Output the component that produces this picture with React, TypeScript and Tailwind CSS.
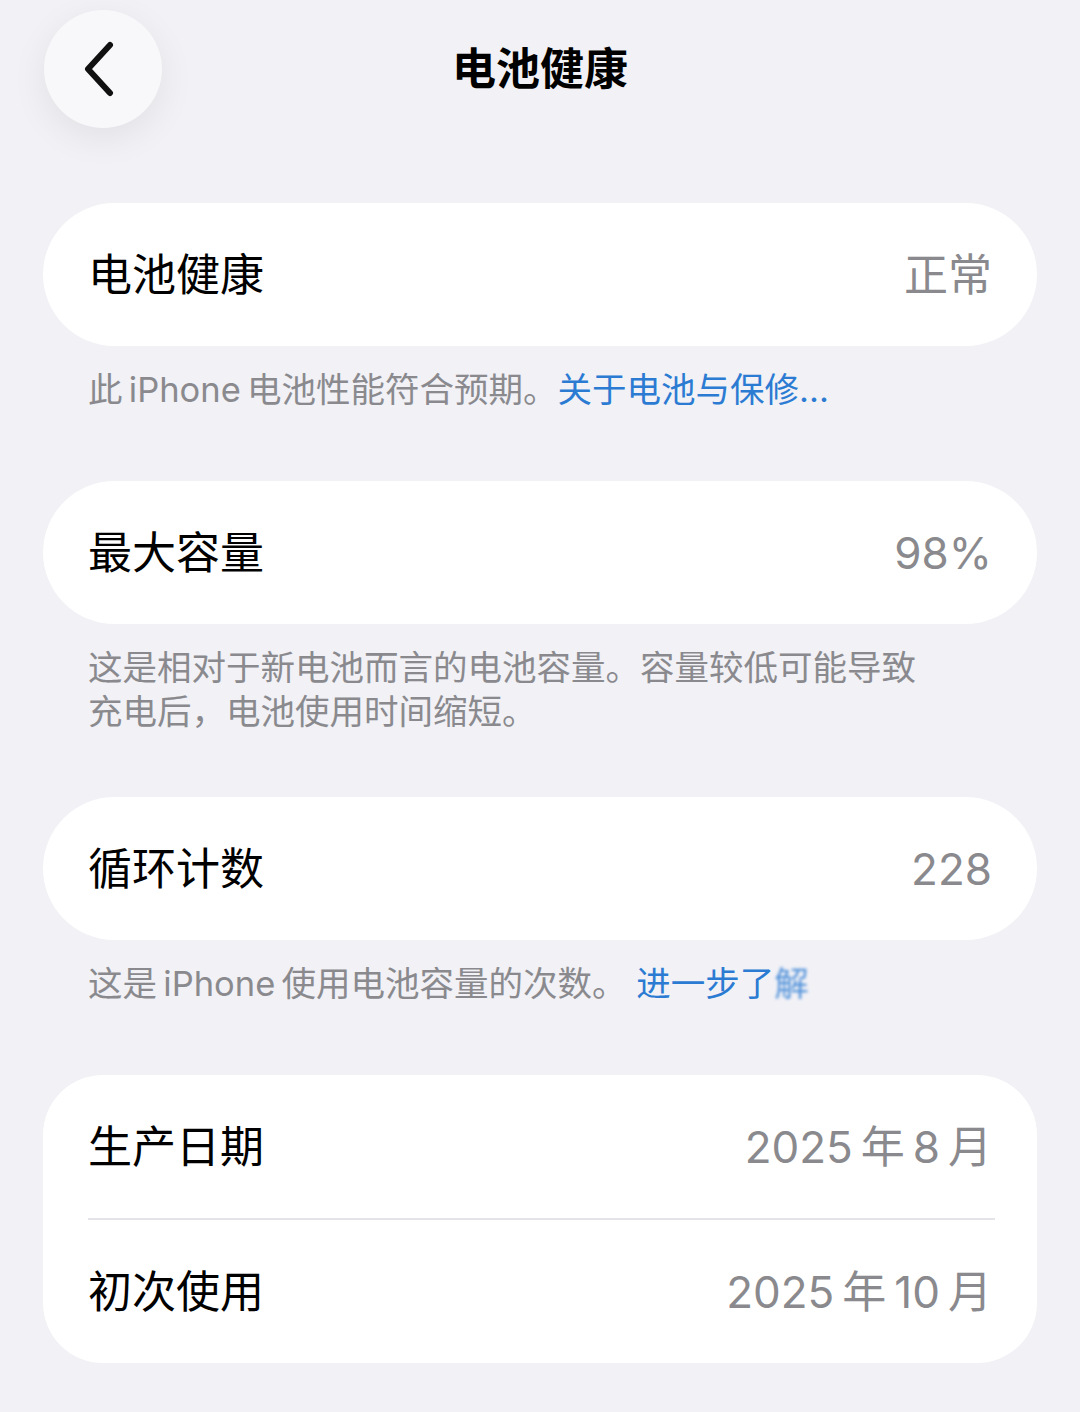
import React from 'react';

const font = { fontFamily: 'Inter, "Noto Sans CJK SC", sans-serif' };

interface RowProps {
  label: string;
  value: string;
}

const Row: React.FC<RowProps> = ({ label, value }) => (
  <div className="flex h-[143px] items-center justify-between pl-[45px] pr-[45px]">
    <span className="text-[44px] leading-none text-black">{label}</span>
    <span className="text-[44px] leading-none text-[#8a8a8e]">{value}</span>
  </div>
);

const Card: React.FC<{ children: React.ReactNode; rounded?: string }> = ({ children, rounded = 'rounded-[72px]' }) => (
  <div className={`mx-[43px] bg-white ${rounded}`}>{children}</div>
);

const Note: React.FC<{ children: React.ReactNode }> = ({ children }) => (
  <div className="px-[88px] pt-[22px] text-[34.5px] leading-[44px] text-[#8a8a8e]">{children}</div>
);

export default function App() {
  return (
    <div className="min-h-[1412px] w-[1080px] bg-[#f1f1f6]" style={font}>
      {/* header */}
      <div className="grid grid-cols-[1fr_auto_1fr] items-center pt-[10px]">
        <div className="pl-[44px]">
          <button className="flex h-[118px] w-[118px] items-center justify-center rounded-full bg-[#f8f8fa] shadow-[0_10px_36px_rgba(0,0,0,0.07)]">
            <svg width="40" height="56" viewBox="0 0 40 56" className="-ml-[6px]">
              <path d="M30 4 L8 28 L30 52" fill="none" stroke="#111" strokeWidth="6" strokeLinecap="round" strokeLinejoin="round" />
            </svg>
          </button>
        </div>
        <h1 className="text-[44px] font-bold leading-none text-black">电池健康</h1>
        <div />
      </div>

      <div className="mt-[75px]">
        <Card>
          <Row label="电池健康" value="正常" />
        </Card>
        <Note>
          此{'\u2009'}iPhone{'\u2009'}电池性能符合预期。<span className="text-[#2b7bd3]">关于电池与保修...</span>
        </Note>

        <div className="mt-[69px]">
          <Card>
            <Row label="最大容量" value="98%" />
          </Card>
        </div>
        <Note>
          这是相对于新电池而言的电池容量。容量较低可能导致
          <br />
          充电后，电池使用时间缩短。
        </Note>

        <div className="mt-[63px]">
          <Card>
            <Row label="循环计数" value="228" />
          </Card>
        </div>
        <Note>
          这是{'\u2009'}iPhone{'\u2009'}使用电池容量的次数。 <span className="text-[#2b7bd3]">进一步了<span className="blur-[1.5px] opacity-80">解</span></span>
        </Note>

        <div className="mt-[69px]">
          <Card rounded="rounded-[60px]">
            <Row label="生产日期" value={'2025\u2009年\u20098\u2009月'} />
            <div className="ml-[45px] mr-[42px] h-[2px] bg-[#e4e4e8]" />
            <Row label="初次使用" value={'2025\u2009年\u200910\u2009月'} />
          </Card>
        </div>
      </div>
    </div>
  );
}
